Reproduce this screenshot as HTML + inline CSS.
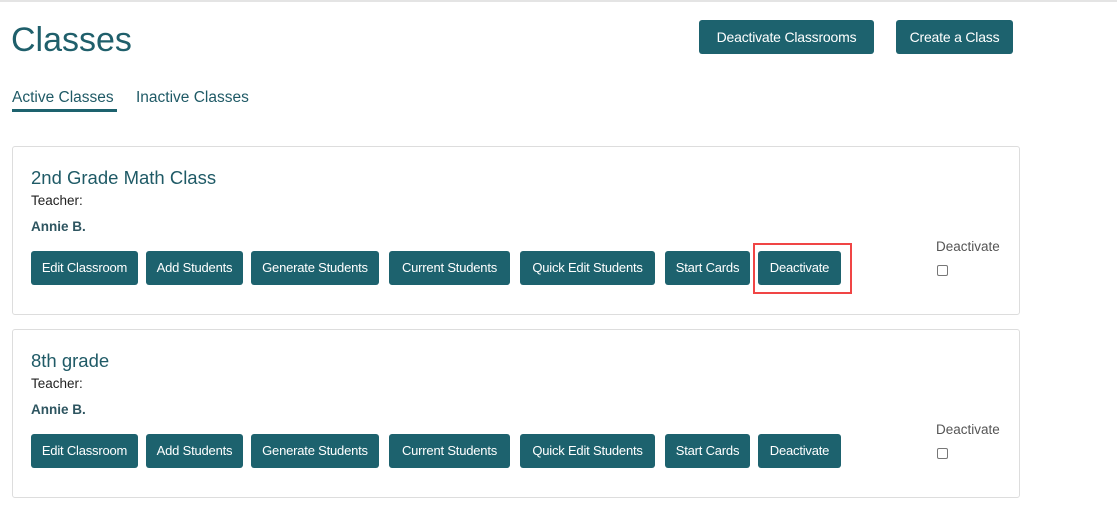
<!DOCTYPE html>
<html><head><style>
body{margin:0;width:1117px;height:505px;background:#fff;position:relative;overflow:hidden;font-family:"Liberation Sans",sans-serif;}
.a{position:absolute;}
.btn{position:absolute;height:34px;background:#1d626e;color:#fff;border-radius:3px;font-size:13px;line-height:34px;text-align:center;letter-spacing:-0.2px;}
.card{position:absolute;left:12px;width:1006px;height:167px;border:1px solid #ddd;border-radius:3px;}
.t{color:#1f5a66;}
.cb{position:absolute;width:9px;height:9px;border:1px solid #777;border-radius:2px;}
</style></head><body>
<div class="a" style="left:0;top:0;width:1117px;height:2px;background:#e4e4e4"></div>
<div class="a t" style="left:11px;top:21px;font-size:34px;color:#1f5f6b">Classes</div>
<div class="btn" style="left:699px;top:20px;width:175px;font-size:14px">Deactivate Classrooms</div>
<div class="btn" style="left:896px;top:20px;width:117px;font-size:14px">Create a Class</div>
<div class="a t" style="left:12px;top:89px;font-size:15.5px">Active Classes</div>
<div class="a t" style="left:136px;top:89px;font-size:15.5px">Inactive Classes</div>
<div class="a" style="left:12px;top:109px;width:105px;height:3px;background:#1d626e"></div>

<div class="card" style="top:146px"></div>
<div class="card" style="top:329px"></div>

<div class="a t" style="left:31px;top:167px;font-size:18.5px">2nd Grade Math Class</div>
<div class="a" style="left:31px;top:193px;font-size:13.5px;color:#222">Teacher:</div>
<div class="a t" style="left:31px;top:219px;font-size:13.5px;font-weight:bold;color:#2e5560">Annie B.</div>
<div class="a" style="left:936px;top:239px;font-size:13.5px;color:#555">Deactivate</div>
<div class="cb" style="left:937px;top:265px"></div>
<div class="btn" style="left:31px;top:251px;width:107px">Edit Classroom</div>
<div class="btn" style="left:146px;top:251px;width:97px">Add Students</div>
<div class="btn" style="left:251px;top:251px;width:128px">Generate Students</div>
<div class="btn" style="left:389px;top:251px;width:121px">Current Students</div>
<div class="btn" style="left:520px;top:251px;width:135px">Quick Edit Students</div>
<div class="btn" style="left:665px;top:251px;width:85px">Start Cards</div>
<div class="btn" style="left:758px;top:251px;width:83px">Deactivate</div>
<div class="a" style="left:753px;top:243px;width:95px;height:47px;border:2px solid #f04545"></div>

<div class="a t" style="left:31px;top:350px;font-size:18.5px">8th grade</div>
<div class="a" style="left:31px;top:376px;font-size:13.5px;color:#222">Teacher:</div>
<div class="a t" style="left:31px;top:402px;font-size:13.5px;font-weight:bold;color:#2e5560">Annie B.</div>
<div class="a" style="left:936px;top:422px;font-size:13.5px;color:#555">Deactivate</div>
<div class="cb" style="left:937px;top:448px"></div>
<div class="btn" style="left:31px;top:434px;width:107px">Edit Classroom</div>
<div class="btn" style="left:146px;top:434px;width:97px">Add Students</div>
<div class="btn" style="left:251px;top:434px;width:128px">Generate Students</div>
<div class="btn" style="left:389px;top:434px;width:121px">Current Students</div>
<div class="btn" style="left:520px;top:434px;width:135px">Quick Edit Students</div>
<div class="btn" style="left:665px;top:434px;width:85px">Start Cards</div>
<div class="btn" style="left:758px;top:434px;width:83px">Deactivate</div>
</body></html>
